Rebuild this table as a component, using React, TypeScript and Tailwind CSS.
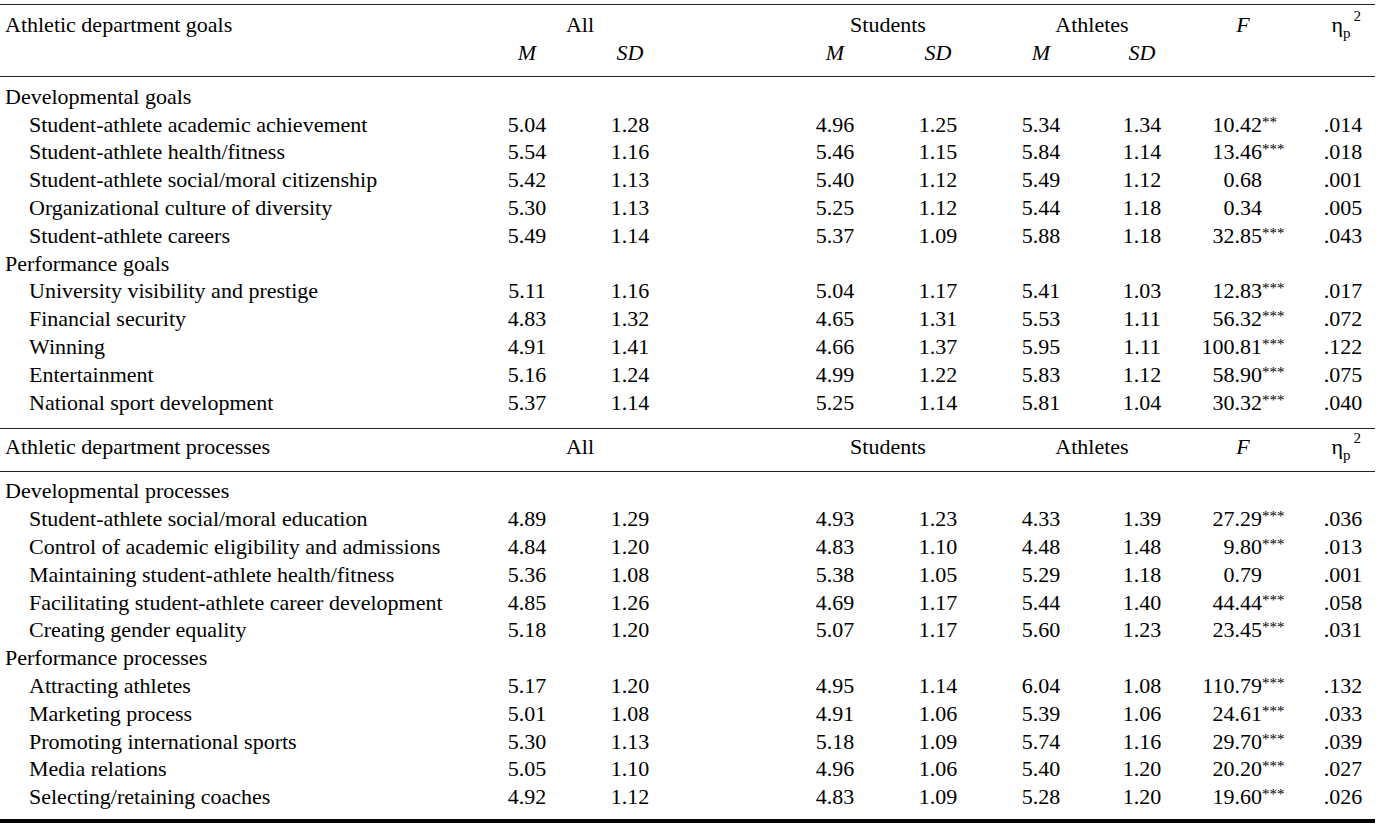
const cols = "grid grid-cols-[477px_100px_106px_102px_100px_106px_100px_102px_100px_82px] items-center";

type Row = { label: string; head?: boolean; v?: string[]; f?: string; stars?: string; eta?: string };

const goals: Row[] = [
  { label: "Developmental goals", head: true },
  { label: "Student-athlete academic achievement", v: ["5.04", "1.28", "4.96", "1.25", "5.34", "1.34"], f: "10.42", stars: "**", eta: ".014" },
  { label: "Student-athlete health/fitness", v: ["5.54", "1.16", "5.46", "1.15", "5.84", "1.14"], f: "13.46", stars: "***", eta: ".018" },
  { label: "Student-athlete social/moral citizenship", v: ["5.42", "1.13", "5.40", "1.12", "5.49", "1.12"], f: "0.68", eta: ".001" },
  { label: "Organizational culture of diversity", v: ["5.30", "1.13", "5.25", "1.12", "5.44", "1.18"], f: "0.34", eta: ".005" },
  { label: "Student-athlete careers", v: ["5.49", "1.14", "5.37", "1.09", "5.88", "1.18"], f: "32.85", stars: "***", eta: ".043" },
  { label: "Performance goals", head: true },
  { label: "University visibility and prestige", v: ["5.11", "1.16", "5.04", "1.17", "5.41", "1.03"], f: "12.83", stars: "***", eta: ".017" },
  { label: "Financial security", v: ["4.83", "1.32", "4.65", "1.31", "5.53", "1.11"], f: "56.32", stars: "***", eta: ".072" },
  { label: "Winning", v: ["4.91", "1.41", "4.66", "1.37", "5.95", "1.11"], f: "100.81", stars: "***", eta: ".122" },
  { label: "Entertainment", v: ["5.16", "1.24", "4.99", "1.22", "5.83", "1.12"], f: "58.90", stars: "***", eta: ".075" },
  { label: "National sport development", v: ["5.37", "1.14", "5.25", "1.14", "5.81", "1.04"], f: "30.32", stars: "***", eta: ".040" },
];

const processes: Row[] = [
  { label: "Developmental processes", head: true },
  { label: "Student-athlete social/moral education", v: ["4.89", "1.29", "4.93", "1.23", "4.33", "1.39"], f: "27.29", stars: "***", eta: ".036" },
  { label: "Control of academic eligibility and admissions", v: ["4.84", "1.20", "4.83", "1.10", "4.48", "1.48"], f: "9.80", stars: "***", eta: ".013" },
  { label: "Maintaining student-athlete health/fitness", v: ["5.36", "1.08", "5.38", "1.05", "5.29", "1.18"], f: "0.79", eta: ".001" },
  { label: "Facilitating student-athlete career development", v: ["4.85", "1.26", "4.69", "1.17", "5.44", "1.40"], f: "44.44", stars: "***", eta: ".058" },
  { label: "Creating gender equality", v: ["5.18", "1.20", "5.07", "1.17", "5.60", "1.23"], f: "23.45", stars: "***", eta: ".031" },
  { label: "Performance processes", head: true },
  { label: "Attracting athletes", v: ["5.17", "1.20", "4.95", "1.14", "6.04", "1.08"], f: "110.79", stars: "***", eta: ".132" },
  { label: "Marketing process", v: ["5.01", "1.08", "4.91", "1.06", "5.39", "1.06"], f: "24.61", stars: "***", eta: ".033" },
  { label: "Promoting international sports", v: ["5.30", "1.13", "5.18", "1.09", "5.74", "1.16"], f: "29.70", stars: "***", eta: ".039" },
  { label: "Media relations", v: ["5.05", "1.10", "4.96", "1.06", "5.40", "1.20"], f: "20.20", stars: "***", eta: ".027" },
  { label: "Selecting/retaining coaches", v: ["4.92", "1.12", "4.83", "1.09", "5.28", "1.20"], f: "19.60", stars: "***", eta: ".026" },
];

function Eta() {
  return (
    <span className="relative inline-block">
      η<span className="relative top-[6px] text-[15px]">p</span>
      <span className="absolute left-full top-[-5px] ml-[3px] text-[15px]">2</span>
    </span>
  );
}

function DataRow({ r }: { r: Row }) {
  if (r.head) {
    return (
      <div className={`${cols} h-[27.8px]`}>
        <div className="pl-[5px] whitespace-nowrap">{r.label}</div>
      </div>
    );
  }
  const v = r.v ?? [];
  return (
    <div className={`${cols} h-[27.8px]`}>
      <div className="pl-[29px] whitespace-nowrap">{r.label}</div>
      <div className="text-center">{v[0]}</div>
      <div className="text-center">{v[1]}</div>
      <div />
      <div className="text-center">{v[2]}</div>
      <div className="text-center">{v[3]}</div>
      <div className="text-center">{v[4]}</div>
      <div className="text-center">{v[5]}</div>
      <div className="text-right pr-[31px]">
        <span className="relative inline-block">
          {r.f}
          {r.stars && <span className="absolute left-full top-[1px] text-[15px]">{r.stars}</span>}
        </span>
      </div>
      <div className="pl-[18px] text-center">{r.eta}</div>
    </div>
  );
}

function Header({ label }: { label: string }) {
  return (
    <div className={`${cols} h-[28px]`}>
      <div className="pl-[5px]">{label}</div>
      <div className="col-span-2 text-center">All</div>
      <div />
      <div className="col-span-2 text-center">Students</div>
      <div className="col-span-2 text-center">Athletes</div>
      <div className="text-center italic">F</div>
      <div className="pl-[14px] text-center"><Eta /></div>
    </div>
  );
}

export default function App() {
  return (
    <div className="w-[1398px] h-[828px] bg-white text-black font-['Liberation_Serif',serif] text-[22px] leading-none pt-[4px]">
      <div className="w-[1375px] border-t border-[#222]">
        <div className="pt-[6px] pb-[9px]">
          <Header label="Athletic department goals" />
          <div className={`${cols} h-[28px] italic`}>
            <div />
            <div className="text-center">M</div>
            <div className="text-center">SD</div>
            <div />
            <div className="text-center">M</div>
            <div className="text-center">SD</div>
            <div className="text-center">M</div>
            <div className="text-center">SD</div>
          </div>
        </div>
        <div className="border-t border-[#222] pt-[6px] pb-[11px]">
          {goals.map((r, i) => <DataRow key={i} r={r} />)}
        </div>
        <div className="border-t border-[#222] pt-[4px] pb-[10px]">
          <Header label="Athletic department processes" />
        </div>
        <div className="border-t border-[#222] pt-[6px] pb-[8px]">
          {processes.map((r, i) => <DataRow key={i} r={r} />)}
        </div>
        <div className="h-[4px] bg-black" />
      </div>
    </div>
  );
}
